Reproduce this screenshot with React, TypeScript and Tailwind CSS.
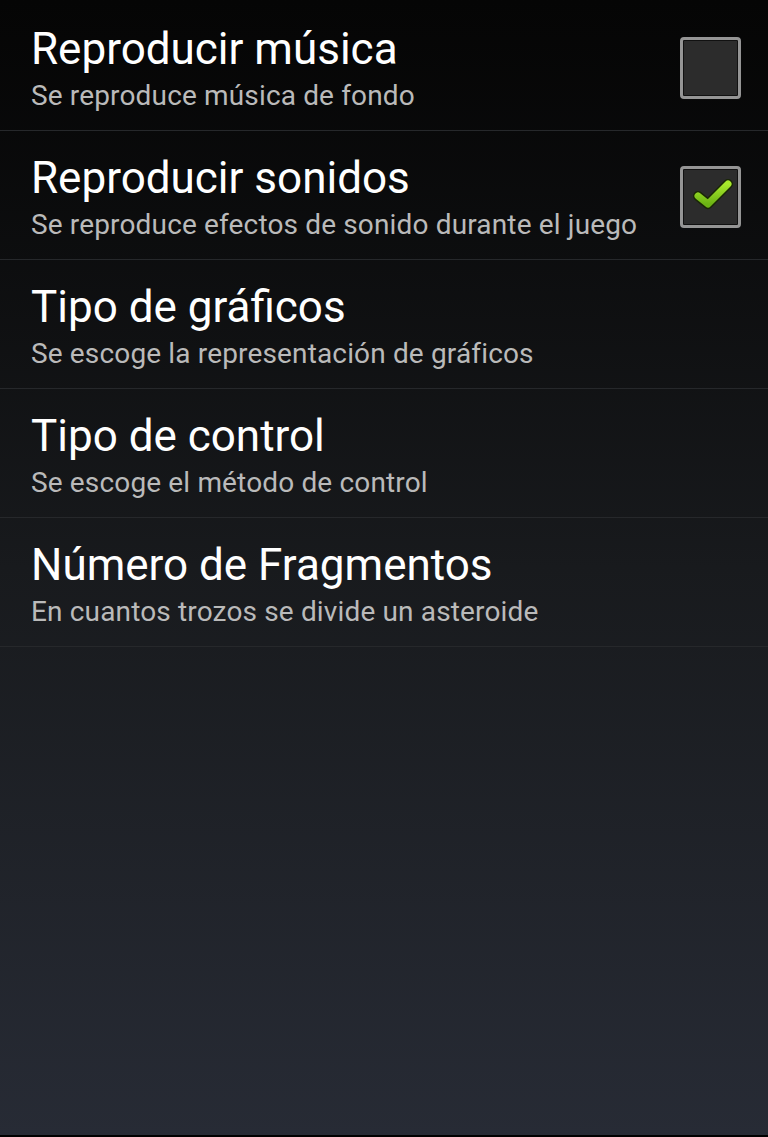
import React from 'react';

type Pref = {
  title: string;
  summary: string;
  checked?: boolean;
};

const prefs: Pref[] = [
  { title: 'Reproducir música', summary: 'Se reproduce música de fondo', checked: false },
  { title: 'Reproducir sonidos', summary: 'Se reproduce efectos de sonido durante el juego', checked: true },
  { title: 'Tipo de gráficos', summary: 'Se escoge la representación de gráficos' },
  { title: 'Tipo de control', summary: 'Se escoge el método de control' },
  { title: 'Número de Fragmentos', summary: 'En cuantos trozos se divide un asteroide' },
];

const CheckBox = ({ checked }: { checked: boolean }) => (
  <div className="mt-[35px] w-[61px] h-[62px] rounded-[4px] border-[3px] border-[#959595] bg-[#2c2c2c] shadow-[inset_0_0_0_1px_#111]">
    {checked && (
      <svg width="55" height="56" viewBox="0 0 55 56">
        <defs>
          <linearGradient id="chk" x1="0" y1="0" x2="0" y2="1">
            <stop offset="0" stopColor="#a8ea2c" />
            <stop offset="1" stopColor="#6cb314" />
          </linearGradient>
        </defs>
        <path d="M15 27 L25 35 L45 15" fill="none" stroke="#1a2706" strokeWidth="10" strokeLinecap="round" strokeLinejoin="round" />
        <path d="M15 27 L25 35 L45 15" fill="none" stroke="url(#chk)" strokeWidth="7" strokeLinecap="round" strokeLinejoin="round" />
      </svg>
    )}
  </div>
);

export default function App() {
  return (
    <div
      className="w-[768px] h-[1137px] pt-[2px] flex flex-col bg-linear-to-b from-[#050505] via-[#181a1d] to-[#272b35] border-b-2 border-black overflow-hidden"
      style={{ fontFamily: 'Roboto, "Noto Sans", sans-serif' }}
    >
      {prefs.map((p) => (
        <div
          key={p.title}
          className="h-[129px] shrink-0 border-b border-[#26282b] flex items-start justify-between pl-[31px] pr-[27px]"
        >
          <div className="flex flex-col pt-[22px]">
            <span className="text-[44px] leading-[50px] text-white">{p.title}</span>
            <span className="mt-[5px] text-[28px] leading-[34px] tracking-[0.15px] text-[#bababa]">{p.summary}</span>
          </div>
          {p.checked !== undefined && <CheckBox checked={p.checked} />}
        </div>
      ))}
    </div>
  );
}
